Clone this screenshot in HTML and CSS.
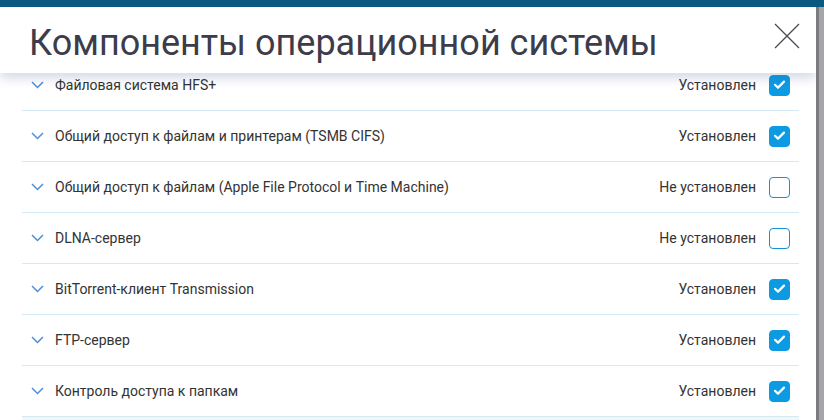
FILE: index.html
```html
<!DOCTYPE html>
<html lang="ru">
<head>
  <meta charset="UTF-8">
  <title>Компоненты операционной системы</title>
  <link rel="stylesheet" href="styles.css">
</head>
<body>
<div class="topbar"></div>
<div class="page">
  <div class="modal">
    <div class="modal-head">
      <h1>Компоненты операционной системы</h1>
      <button class="close" aria-label="Закрыть">
        <svg width="26" height="26" viewBox="0 0 26 26"><path d="M1 1 L25 25 M25 1 L1 25" stroke="#4a4a52" stroke-width="1.3" fill="none"/></svg>
      </button>
    </div>
    <ul class="list">
      <li class="row">
        <svg class="chev" width="13" height="8" viewBox="0 0 13 8"><path d="M1 1 L6.5 6.5 L12 1" stroke="#4d8fd6" stroke-width="1.5" fill="none"/></svg>
        <span class="name">Файловая система HFS+</span>
        <span class="status">Установлен</span>
        <span class="check on"><svg width="21" height="21" viewBox="0 0 21 21"><path d="M6 10.8 L9 13.6 L15 7.6" stroke="#fff" stroke-width="2.2" fill="none" stroke-linecap="round" stroke-linejoin="round"/></svg></span>
      </li>
      <li class="row">
        <svg class="chev" width="13" height="8" viewBox="0 0 13 8"><path d="M1 1 L6.5 6.5 L12 1" stroke="#4d8fd6" stroke-width="1.5" fill="none"/></svg>
        <span class="name">Общий доступ к файлам и принтерам (TSMB CIFS)</span>
        <span class="status">Установлен</span>
        <span class="check on"><svg width="21" height="21" viewBox="0 0 21 21"><path d="M6 10.8 L9 13.6 L15 7.6" stroke="#fff" stroke-width="2.2" fill="none" stroke-linecap="round" stroke-linejoin="round"/></svg></span>
      </li>
      <li class="row">
        <svg class="chev" width="13" height="8" viewBox="0 0 13 8"><path d="M1 1 L6.5 6.5 L12 1" stroke="#4d8fd6" stroke-width="1.5" fill="none"/></svg>
        <span class="name">Общий доступ к файлам (Apple File Protocol и Time Machine)</span>
        <span class="status">Не установлен</span>
        <span class="check"></span>
      </li>
      <li class="row">
        <svg class="chev" width="13" height="8" viewBox="0 0 13 8"><path d="M1 1 L6.5 6.5 L12 1" stroke="#4d8fd6" stroke-width="1.5" fill="none"/></svg>
        <span class="name">DLNA-сервер</span>
        <span class="status">Не установлен</span>
        <span class="check"></span>
      </li>
      <li class="row">
        <svg class="chev" width="13" height="8" viewBox="0 0 13 8"><path d="M1 1 L6.5 6.5 L12 1" stroke="#4d8fd6" stroke-width="1.5" fill="none"/></svg>
        <span class="name">BitTorrent-клиент Transmission</span>
        <span class="status">Установлен</span>
        <span class="check on"><svg width="21" height="21" viewBox="0 0 21 21"><path d="M6 10.8 L9 13.6 L15 7.6" stroke="#fff" stroke-width="2.2" fill="none" stroke-linecap="round" stroke-linejoin="round"/></svg></span>
      </li>
      <li class="row">
        <svg class="chev" width="13" height="8" viewBox="0 0 13 8"><path d="M1 1 L6.5 6.5 L12 1" stroke="#4d8fd6" stroke-width="1.5" fill="none"/></svg>
        <span class="name">FTP-сервер</span>
        <span class="status">Установлен</span>
        <span class="check on"><svg width="21" height="21" viewBox="0 0 21 21"><path d="M6 10.8 L9 13.6 L15 7.6" stroke="#fff" stroke-width="2.2" fill="none" stroke-linecap="round" stroke-linejoin="round"/></svg></span>
      </li>
      <li class="row">
        <svg class="chev" width="13" height="8" viewBox="0 0 13 8"><path d="M1 1 L6.5 6.5 L12 1" stroke="#4d8fd6" stroke-width="1.5" fill="none"/></svg>
        <span class="name">Контроль доступа к папкам</span>
        <span class="status">Установлен</span>
        <span class="check on"><svg width="21" height="21" viewBox="0 0 21 21"><path d="M6 10.8 L9 13.6 L15 7.6" stroke="#fff" stroke-width="2.2" fill="none" stroke-linecap="round" stroke-linejoin="round"/></svg></span>
      </li>
      <li class="row more"></li>
    </ul>
  </div>
</div>
</body>
</html>
```

FILE: styles.css
```css
html, body { margin: 0; padding: 0; height: 100%; overflow: hidden; }
body { font-family: Roboto, "Liberation Sans", Arial, sans-serif; background: #a6a6aa; }
.topbar { height: 7px; background: #0a5a80; }
.page { display: flex; height: calc(100% - 7px); }
.modal { width: 816px; background: #fff; border-right: 3px solid #7c7c80; overflow: hidden; }
.modal-head { position: relative; z-index: 2; height: 66px; box-sizing: border-box; padding: 15px 16px 0 29px; display: flex; align-items: flex-start; justify-content: space-between; background: #fff; box-shadow: 0 5px 10px rgba(70, 80, 140, 0.22); }
h1 { margin: 0; font-size: 36px; line-height: 42px; font-weight: 400; color: #3d3c4a; letter-spacing: 0; }
.close { margin-top: 1px; padding: 0; border: none; background: none; width: 26px; height: 26px; }
.list { list-style: none; margin: -13px 17px 0 22px; padding: 0; }
.row { display: flex; align-items: center; height: 50px; border-bottom: 1px solid #d5e9f5; padding: 0 9px; font-size: 14px; color: #333; }
.chev { flex: none; margin-right: 11px; }
.name { flex: 1; }
.status { margin-right: 13px; }
.check { flex: none; width: 21px; height: 21px; box-sizing: border-box; border: 1.5px solid #1890d8; border-radius: 4px; display: flex; }
.check.on { background: #0c9be3; border-color: #0c9be3; }
.check.on svg { margin: -1.5px; }
.row.more { height: 3px; background: #f3f5f7; border-bottom: none; }
```
